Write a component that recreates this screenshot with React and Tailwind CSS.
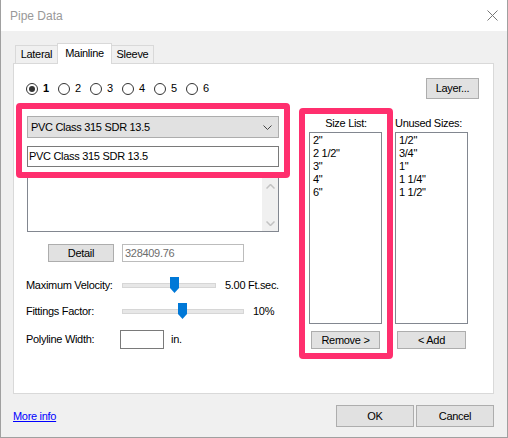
import React from 'react'

const sizes = ['2"', '2 1/2"', '3"', '4"', '6"']
const unused = ['1/2"', '3/4"', '1"', '1 1/4"', '1 1/2"']

function Btn({ className = '', children }) {
  return (
    <div className={`bg-[#e1e1e1] border border-[#adadad] flex items-center justify-center ${className}`}>
      {children}
    </div>
  )
}

function Radio({ n, checked }) {
  return (
    <div className="flex items-center w-[32px]">
      <span className="w-[12px] h-[12px] rounded-full border border-[#333] bg-white flex items-center justify-center">
        {checked && <span className="w-[6px] h-[6px] rounded-full bg-[#333]" />}
      </span>
      <span className={`ml-[5px] ${checked ? 'font-bold' : ''}`}>{n}</span>
    </div>
  )
}

function Slider({ width, thumb }) {
  return (
    <div className={`relative h-[16px] ${width}`}>
      <div className="absolute left-0 right-0 top-[6px] h-[5px] bg-[#e7e7e7] border border-[#d6d6d6]" />
      <svg className={`absolute top-0 ${thumb}`} width="9" height="16" viewBox="0 0 9 16">
        <polygon points="0,0 9,0 9,11 4.5,16 0,11" fill="#0078d7" />
      </svg>
    </div>
  )
}

function ListBox({ items }) {
  return (
    <div className="w-[73px] h-[192px] bg-white border border-[#828790] pt-[1px] pl-[3px]">
      {items.map((s) => (
        <div key={s} className="h-[13px] leading-[13px]">{s}</div>
      ))}
    </div>
  )
}

export default function App() {
  return (
    <div className="w-[508px] h-[438px] flex flex-col border-x border-b border-[#a0a0a0] bg-[#f0f0f0] font-['Liberation_Sans',Arial,sans-serif] text-[11px] tracking-[-0.3px] text-black leading-none select-none">
      {/* title bar */}
      <div className="h-[31px] bg-white flex items-center justify-between pl-[9px] pr-[9px]">
        <span className="text-[12px] text-[#999] tracking-normal">Pipe Data</span>
        <svg width="11" height="11" viewBox="0 0 11 11">
          <path d="M0.5 0.5L10.5 10.5M10.5 0.5L0.5 10.5" stroke="#777" strokeWidth="1" />
        </svg>
      </div>

      <div className="flex-1 flex flex-col pl-[12px] pt-[12px]">
        {/* tabs */}
        <div className="flex items-end h-[21px] pl-[2px] relative z-10">
          <div className="w-[43px] h-[18px] mb-[1px] border border-b-0 border-[#d9d9d9] bg-[#f0f0f0] flex items-center justify-center">Lateral</div>
          <div className="w-[55px] h-[21px] -mx-px border border-b-0 border-[#d9d9d9] bg-white flex items-center justify-center pb-[2px] relative z-10">Mainline</div>
          <div className="w-[43px] h-[18px] mb-[1px] border border-b-0 border-[#d9d9d9] bg-[#f0f0f0] flex items-center justify-center">Sleeve</div>
        </div>

        {/* panel */}
        <div className="w-[481px] h-[331px] -mt-px bg-white border border-[#d9d9d9] flex flex-col">
          <div className="mt-[14px] h-[21px] flex items-center justify-between pl-[12px] pr-[14px]">
            <div className="flex items-center">
              {[1, 2, 3, 4, 5, 6].map((n) => (
                <Radio key={n} n={n} checked={n === 1} />
              ))}
            </div>
            <Btn className="w-[53px] h-[21px]">Layer...</Btn>
          </div>

          <div className="mt-[4px] flex items-start">
            {/* left column */}
            <div className="ml-[2px] w-[274px] flex flex-col">
              <div className="relative z-10 h-[75px] border-[6px] border-[#ff2f6e] rounded-[4px] bg-white pl-[5px] pt-[7px]">
                <div className="w-[252px] h-[22px] bg-[#e1e1e1] border border-[#adadad] flex items-center justify-between pl-[3px] pr-[6px]">
                  <span>PVC Class 315 SDR 13.5</span>
                  <svg width="9" height="5" viewBox="0 0 9 5">
                    <path d="M0.5 0.5L4.5 4.5L8.5 0.5" stroke="#444" fill="none" strokeWidth="1" />
                  </svg>
                </div>
                <div className="mt-[8px] w-[252px] h-[21px] bg-white border border-[#7a7a7a] flex items-center pl-[1px]">
                  PVC Class 315 SDR 13.5
                </div>
              </div>

              <div className="ml-[11px] -mt-px w-[252px] h-[55px] border border-[#828790] bg-white flex justify-end">
                <div className="w-[16px] h-full bg-[#f0f0f0] flex flex-col items-center justify-between pt-[6px] pb-[5px]">
                  <svg width="9" height="5" viewBox="0 0 9 5">
                    <path d="M0.5 4.5L4.5 0.5L8.5 4.5" stroke="#c2c2c2" fill="none" strokeWidth="1.5" />
                  </svg>
                  <svg width="9" height="5" viewBox="0 0 9 5">
                    <path d="M0.5 0.5L4.5 4.5L8.5 0.5" stroke="#c2c2c2" fill="none" strokeWidth="1.5" />
                  </svg>
                </div>
              </div>

              <div className="mt-[12px] flex items-center">
                <Btn className="ml-[32px] w-[66px] h-[18px]">Detail</Btn>
                <div className="ml-[8px] w-[122px] h-[18px] border border-[#bcbcbc] bg-white flex items-center pl-[2px] text-[#6d6d6d]">
                  328409.76
                </div>
              </div>

              <div className="mt-[15px] flex items-center">
                <span className="ml-[10px] w-[96px]">Maximum Velocity:</span>
                <Slider width="w-[94px]" thumb="left-[48px]" />
                <span className="ml-[9px]">5.00 Ft.sec.</span>
              </div>

              <div className="mt-[10px] flex items-center">
                <span className="ml-[10px] w-[96px]">Fittings Factor:</span>
                <Slider width="w-[122px]" thumb="left-[56px]" />
                <span className="ml-[9px]">10%</span>
              </div>

              <div className="mt-[11px] flex items-center">
                <span className="ml-[10px] w-[94px]">Polyline Width:</span>
                <div className="w-[44px] h-[19px] border border-[#7a7a7a] bg-white" />
                <span className="ml-[7px]">in.</span>
              </div>
            </div>

            {/* size list */}
            <div className="ml-[9px] mt-[5px] w-[94px] h-[251px] border-[6px] border-[#ff2f6e] rounded-[4px] bg-white flex flex-col pl-[4px]">
              <div className="h-[18px] flex items-center justify-center pr-[4px]">Size List:</div>
              <ListBox items={sizes} />
              <Btn className="mt-[7px] ml-[2px] w-[69px] h-[18px]">Remove &gt;</Btn>
            </div>

            {/* unused sizes */}
            <div className="ml-[2px] mt-[11px] flex flex-col">
              <div className="h-[18px] flex items-center">Unused Sizes:</div>
              <ListBox items={unused} />
              <Btn className="mt-[7px] ml-[2px] w-[69px] h-[18px]">&lt; Add</Btn>
            </div>
          </div>
        </div>

        {/* bottom */}
        <div className="mt-[11px] w-[481px] flex items-center justify-between">
          <span className="text-[#0000ff] underline">More info</span>
          <div className="flex gap-[2px]">
            <Btn className="w-[78px] h-[22px]">OK</Btn>
            <Btn className="w-[78px] h-[22px]">Cancel</Btn>
          </div>
        </div>
      </div>
    </div>
  )
}
